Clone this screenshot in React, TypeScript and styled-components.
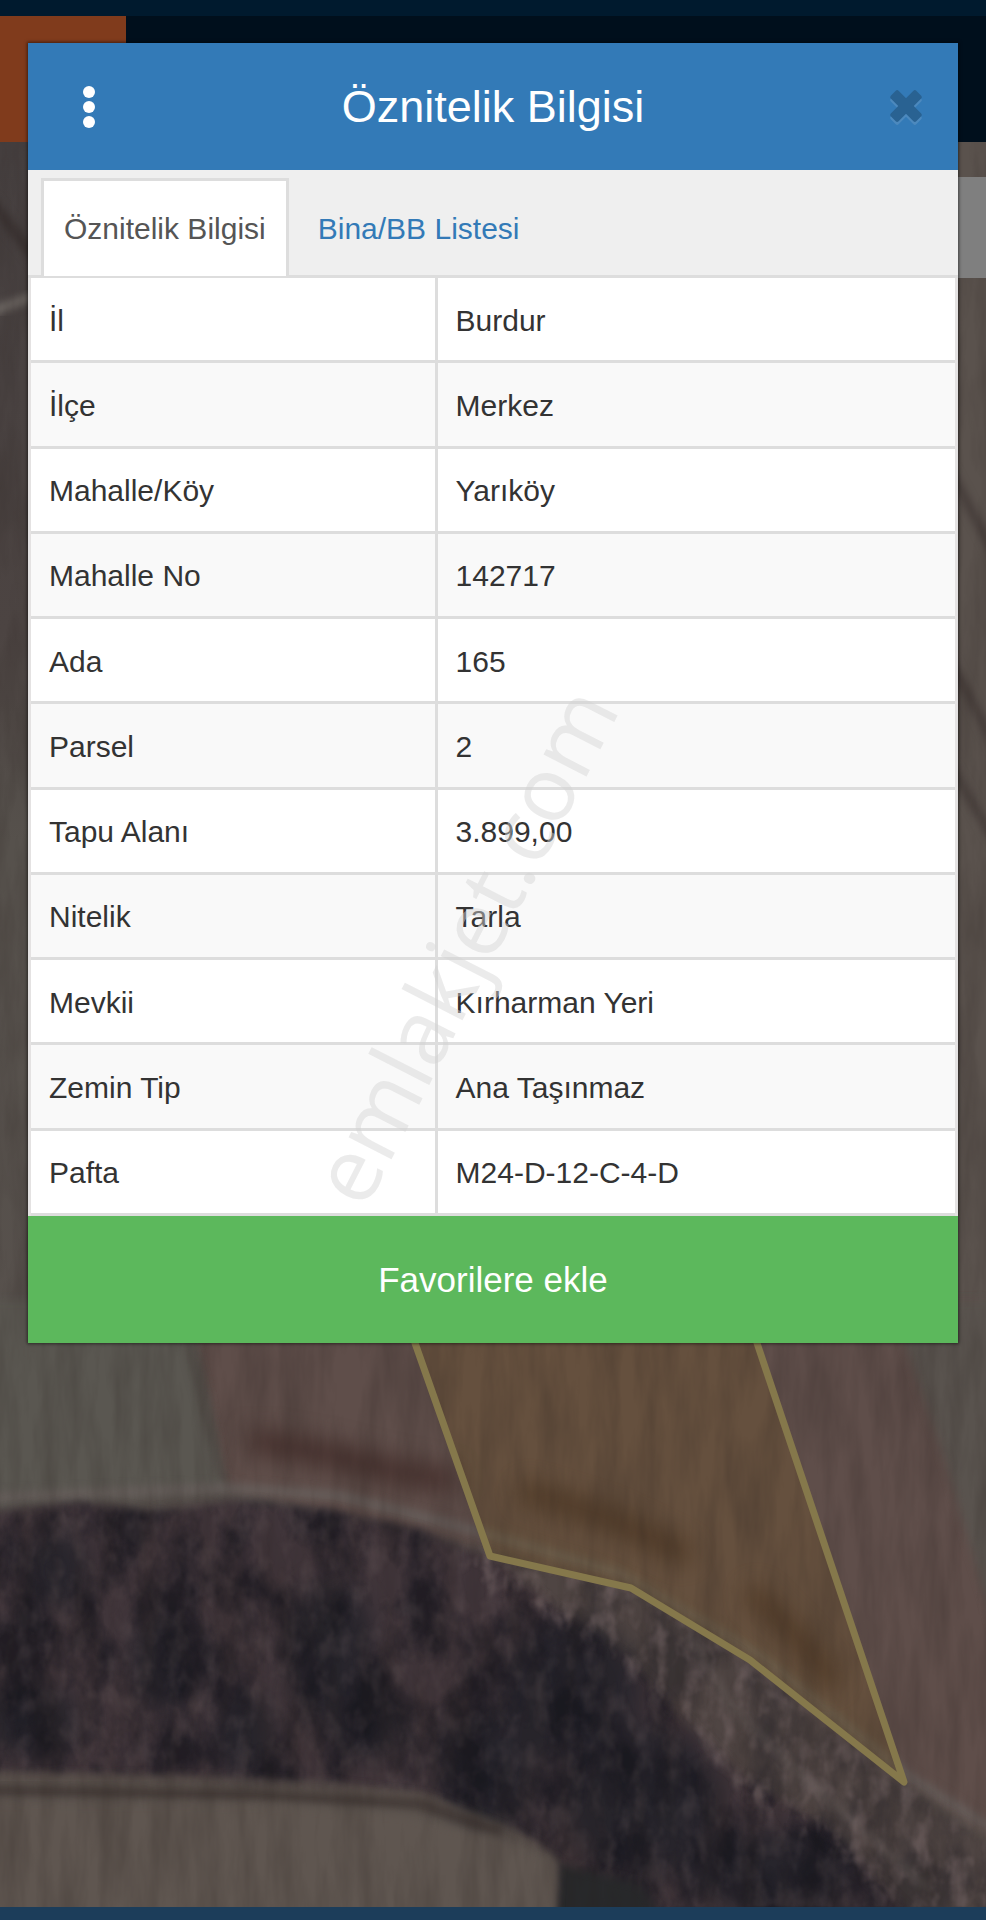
import { useState } from 'react';
import styled, { createGlobalStyle } from 'styled-components';

const GlobalStyle = createGlobalStyle`
  * {
    box-sizing: border-box;
  }

  body {
    margin: 0;
    background: #001a2e;
    font-family: "Liberation Sans", Arial, Helvetica, sans-serif;
    font-size: 30px;
    color: #333;
  }

  button {
    font-family: inherit;
    border: 0;
    padding: 0;
    cursor: pointer;
  }
`;

/* the page and the dialog share one grid cell */
const Layers = styled.div`
  display: grid;
  grid-template-columns: minmax(0, 1fr);
  min-height: 100vh;
  overflow: hidden;

  > * {
    grid-area: 1 / 1;
  }
`;

const Page = styled.div`
  display: flex;
  flex-direction: column;
`;

const StatusBar = styled.div`
  height: 16px;
  background: #001a2e;
`;

const NavBar = styled.header`
  height: 126px;
  background: #000f1c;
`;

const NavButton = styled.button`
  display: block;
  width: 126px;
  height: 126px;
  background: #803b1c;
`;

const MapArea = styled.main`
  position: relative;
  flex: 1;
  padding-top: 35px;
`;

const MapDrawing = styled.svg`
  position: absolute;
  inset: 0;
  width: 100%;
  height: 100%;

  filter {
    color-interpolation-filters: sRGB;
  }
`;

const MapControl = styled.div`
  position: relative;
  width: 126px;
  height: 101px;
  margin-left: auto;
  background: #7f7f7f;
`;

const BottomBar = styled.footer`
  height: 13px;
  background: #1c3d5a;
`;

const Overlay = styled.div`
  z-index: 1;
  padding: 43px 28px;
`;

const Dialog = styled.section`
  background: #fff;
  box-shadow: 0 0 3px 1px rgba(0, 0, 0, 0.5);
`;

const DialogHeader = styled.div`
  display: grid;
  grid-template-columns: 122px 1fr 122px;
  align-items: center;
  height: 127px;
  background: #337ab7;
`;

const Title = styled.h1`
  margin: 0;
  font-size: 45px;
  font-weight: 400;
  text-align: center;
  color: #fff;
`;

const IconButton = styled.button`
  display: flex;
  align-items: center;
  justify-content: center;
  height: 74px;
  background: transparent;
`;

const CloseButton = styled(IconButton)`
  justify-self: end;
  width: 104px;
`;

const Tabs = styled.div`
  display: flex;
  gap: 6px;
  height: 108px;
  padding: 8px 13px 0;
  background: #efefef;
  border-bottom: 3px solid #ddd;
`;

const Tab = styled.button<{ $active: boolean }>`
  height: 98px;
  padding: 0 20px;
  border: 3px solid ${props => (props.$active ? '#ddd' : 'transparent')};
  border-bottom: 0;
  background: ${props => (props.$active ? '#fff' : 'transparent')};
  color: ${props => (props.$active ? '#555' : '#337ab7')};
  font-size: 30px;
`;

const Table = styled.table`
  width: 100%;
  height: 938px;
  border-collapse: separate;
  border-spacing: 0;
  border: solid #e4e2e2;
  border-width: 0 3px;
`;

const Row = styled.tr`
  > * {
    height: 85px;
    padding: 3px 18px 0;
    border-bottom: 3px solid #ddd;
  }

  &:nth-child(even) {
    background: #f9f9f9;
  }
`;

const Label = styled.th`
  width: 44%;
  border-right: 3px solid #ddd;
  font-weight: 400;
  text-align: left;
`;

const Value = styled.td`
  text-align: left;
`;

const FavoriteButton = styled.button`
  display: block;
  width: 100%;
  height: 127px;
  background: #5cb85c;
  color: #fff;
  font-size: 35px;
`;

const Watermark = styled.span`
  position: absolute;
  top: 960px;
  left: 50%;
  z-index: 2;
  transform: translate(-50%, -50%) rotate(-63deg) translateY(-35px);
  color: rgba(211, 211, 211, 0.46);
  font-family: "Open Sans", sans-serif;
  font-size: 90px;
  white-space: nowrap;
  pointer-events: none;
`;

const rows = [
  ['İl', 'Burdur'],
  ['İlçe', 'Merkez'],
  ['Mahalle/Köy', 'Yarıköy'],
  ['Mahalle No', '142717'],
  ['Ada', '165'],
  ['Parsel', '2'],
  ['Tapu Alanı', '3.899,00'],
  ['Nitelik', 'Tarla'],
  ['Mevkii', 'Kırharman Yeri'],
  ['Zemin Tip', 'Ana Taşınmaz'],
  ['Pafta', 'M24-D-12-C-4-D'],
];

const tabs = ['Öznitelik Bilgisi', 'Bina/BB Listesi'];

const forest =
  'M-20 1514 L80 1502 L150 1512 L235 1500 L330 1510 L420 1530 L500 1562 L560 1612 L620 1650 L680 1715 L740 1775 L830 1830 L925 1930 L560 1930 L556 1856 L500 1818 L420 1792 L300 1784 L180 1778 L-20 1772 Z';
const scrub =
  'M470 1545 L640 1590 L750 1662 L904 1784 L1000 1850 L1000 1930 L925 1930 L830 1850 L740 1790 L680 1720 L610 1650 L540 1610 L470 1585 Z';
const parcel = 'M345 1100 L415 1343 L490 1556 L631 1588 L750 1660 L904 1782 L757 1343 L676 1100';

const SatelliteMap = () => (
  <MapDrawing viewBox="0 142 986 1765" preserveAspectRatio="xMidYMid slice" aria-hidden="true">
    <defs>
      <linearGradient id="ground" x1="0" y1="0" x2="0" y2="1">
        <stop offset="0" stopColor="#464040" />
        <stop offset="0.35" stopColor="#4c4442" />
        <stop offset="0.5" stopColor="#56514c" />
        <stop offset="1" stopColor="#57504c" />
      </linearGradient>
      <filter id="soft" x="-20%" y="-20%" width="140%" height="140%">
        <feGaussianBlur stdDeviation="4" />
      </filter>
      <filter id="softer" x="-50%" y="-80%" width="200%" height="260%">
        <feGaussianBlur stdDeviation="12" />
      </filter>
      <filter id="soil" x="0" y="0" width="100%" height="100%">
        <feTurbulence type="fractalNoise" baseFrequency="0.05 0.009" numOctaves="4" seed="8" />
        <feColorMatrix values="0 0 0 0 0.14  0 0 0 0 0.11  0 0 0 0 0.1  1.8 0 0 0 -0.6" />
      </filter>
      <filter id="trees" x="0" y="0" width="100%" height="100%">
        <feTurbulence type="fractalNoise" baseFrequency="0.02 0.013" numOctaves="5" seed="21" />
        <feColorMatrix values="0 0 0 0 0.08  0 0 0 0 0.08  0 0 0 0 0.11  3 0 0 0 -1.15" />
      </filter>
      <filter id="twigs" x="0" y="0" width="100%" height="100%">
        <feTurbulence type="fractalNoise" baseFrequency="0.06 0.035" numOctaves="4" seed="5" />
        <feColorMatrix values="0 0 0 0 0.46  0 0 0 0 0.4  0 0 0 0 0.4  0 3 0 0 -1.35" />
        <feGaussianBlur stdDeviation="1" />
      </filter>
      <mask id="forestMask" maskUnits="userSpaceOnUse" x="0" y="1440" width="986" height="467">
        <path d={forest} fill="#fff" filter="url(#soft)" />
      </mask>
      <mask id="scrubMask" maskUnits="userSpaceOnUse" x="440" y="1500" width="546" height="407">
        <path d={scrub} fill="#fff" filter="url(#soft)" />
      </mask>
    </defs>

    <rect y="142" width="986" height="1765" fill="#5a524d" />
    <rect y="142" width="300" height="1400" fill="url(#ground)" />
    <path d="M-10 312 L40 294" stroke="#77716c" strokeWidth="7" filter="url(#soft)" />
    <path d="M-10 200 L40 265" stroke="#38302f" strokeWidth="10" filter="url(#soft)" />
    <path d="M950 470 L1000 565 M950 660 L1000 755 M950 765 L1000 850" stroke="#3d3432" strokeWidth="6" filter="url(#soft)" />

    {/* fields */}
    <path d="M190 1300 L980 1300 L1010 1850 L904 1782 L490 1550 L225 1488 Z" fill="#5f4e4a" filter="url(#soft)" />
    <path d="M-20 1300 L182 1300 L208 1400 L226 1490 L-20 1510 Z" fill="#5a5751" filter="url(#soft)" />
    <path d="M890 1300 L1010 1300 L1010 1680 L945 1460 Z" fill="#59534e" filter="url(#soft)" />
    <path d="M184 1330 L222 1480" stroke="#48413d" strokeWidth="4" filter="url(#soft)" />
    <path d="M250 1440 L330 1455 L390 1470 L455 1482" fill="none" stroke="#402a27" strokeWidth="20" filter="url(#softer)" />
    <path d="M-20 1498 L230 1488 L340 1496 L480 1532 L620 1574 L760 1656 L910 1778 L1000 1834" fill="none" stroke="#665e5b" strokeWidth="9" filter="url(#soft)" />

    {/* tree line and the scrub beside it */}
    <path d={scrub} fill="#4f4543" filter="url(#soft)" />
    <path d={forest} fill="#40353a" filter="url(#soft)" />
    <g fill="#1b1d25" opacity="0.65" filter="url(#softer)">
      <ellipse cx="55" cy="1570" rx="34" ry="40" />
      <ellipse cx="165" cy="1660" rx="35" ry="50" />
      <ellipse cx="330" cy="1650" rx="44" ry="70" />
      <ellipse cx="245" cy="1735" rx="30" ry="44" />
      <ellipse cx="365" cy="1720" rx="40" ry="40" />
      <ellipse cx="490" cy="1770" rx="50" ry="60" />
      <ellipse cx="570" cy="1690" rx="70" ry="70" />
      <ellipse cx="640" cy="1800" rx="80" ry="75" />
      <ellipse cx="770" cy="1870" rx="90" ry="40" />
      <ellipse cx="30" cy="1720" rx="50" ry="36" />
    </g>
    <g mask="url(#forestMask)">
      <rect y="1440" width="986" height="467" filter="url(#trees)" opacity="0.7" />
      <rect y="1440" width="986" height="467" filter="url(#twigs)" opacity="0.22" />
    </g>
    <g mask="url(#scrubMask)">
      <rect x="440" y="1500" width="546" height="407" filter="url(#trees)" opacity="0.35" />
      <rect x="440" y="1500" width="546" height="407" filter="url(#twigs)" opacity="0.6" />
    </g>
    <path d="M556 1930 L558 1864 L640 1885 L670 1930 Z" fill="#28292b" filter="url(#soft)" />
    <path d="M690 1635 L735 1710 L790 1765 L840 1810 L930 1890" fill="none" stroke="#6d6461" strokeWidth="4" opacity="0.7" filter="url(#soft)" />
    <path d="M-10 1776 L180 1780 L330 1786 L430 1800 L540 1848" fill="none" stroke="#5a504b" strokeWidth="5" filter="url(#soft)" />
    <path d="M-10 1790 L260 1795 L420 1804 L500 1832" fill="none" stroke="#403734" strokeWidth="9" filter="url(#soft)" />
    <path d="M-20 1802 L260 1804 L400 1814 L500 1838 L558 1862 L554 1930 L-20 1930 Z" fill="#5f5650" filter="url(#soft)" />

    <path d={parcel} fill="#76591f" fillOpacity="0.27" />
    <path d="M520 1490 L610 1518 L690 1556 M750 1590 L800 1640 L835 1685" fill="none" stroke="#46301c" strokeWidth="18" opacity="0.8" filter="url(#softer)" />
    <rect y="142" width="986" height="1765" filter="url(#soil)" opacity="0.22" />
    <path d={parcel} fill="none" stroke="#85784b" strokeWidth="7" strokeLinejoin="round" />
  </MapDrawing>
);

const App = () => {
  const [activeTab, setActiveTab] = useState(0);

  return (
    <>
      <GlobalStyle />
      <Layers>
        <Page>
          <StatusBar />
          <NavBar>
            <NavButton aria-label="Menü" />
          </NavBar>
          <MapArea>
            <SatelliteMap />
            <MapControl />
          </MapArea>
          <BottomBar />
        </Page>

        <Overlay>
          <Dialog role="dialog" aria-labelledby="dialog-title">
            <DialogHeader>
              <IconButton aria-label="Seçenekler">
                <svg width="12" height="42" viewBox="0 0 12 42" fill="#fff">
                  <circle cx="6" cy="6" r="6" />
                  <circle cx="6" cy="21" r="6" />
                  <circle cx="6" cy="36" r="6" />
                </svg>
              </IconButton>
              <Title id="dialog-title">Öznitelik Bilgisi</Title>
              <CloseButton aria-label="Kapat">
                <svg width="36" height="38" viewBox="-18 -18 36 38">
                  <g transform="translate(0 3)" fill="#4c89be">
                    <rect x="-18" y="-5.5" width="36" height="11" rx="2" transform="rotate(45)" />
                    <rect x="-18" y="-5.5" width="36" height="11" rx="2" transform="rotate(-45)" />
                  </g>
                  <g fill="#296292">
                    <rect x="-18" y="-5.5" width="36" height="11" rx="2" transform="rotate(45)" />
                    <rect x="-18" y="-5.5" width="36" height="11" rx="2" transform="rotate(-45)" />
                  </g>
                </svg>
              </CloseButton>
            </DialogHeader>

            <Tabs role="tablist">
              {tabs.map((tab, i) => (
                <Tab
                  key={tab}
                  role="tab"
                  aria-selected={i === activeTab}
                  $active={i === activeTab}
                  onClick={() => setActiveTab(i)}
                >
                  {tab}
                </Tab>
              ))}
            </Tabs>

            <Table>
              <tbody>
                {rows.map(([label, value]) => (
                  <Row key={label}>
                    <Label scope="row">{label}</Label>
                    <Value>{value}</Value>
                  </Row>
                ))}
              </tbody>
            </Table>

            <FavoriteButton>Favorilere ekle</FavoriteButton>
          </Dialog>
        </Overlay>
      </Layers>
      <Watermark aria-hidden="true">emlakjet.com</Watermark>
    </>
  )
}

export default App;
